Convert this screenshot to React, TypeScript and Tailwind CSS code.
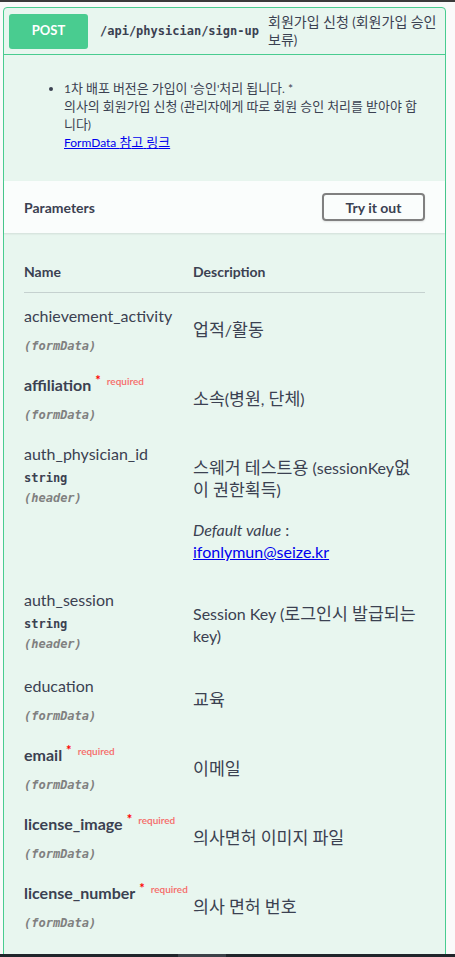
type Param = {
  name: string;
  required?: boolean;
  type?: string;
  in: string;
  desc: string;
  def?: string;
};

const params: Param[] = [
  { name: "achievement_activity", in: "formData", desc: "업적/활동" },
  { name: "affiliation", required: true, in: "formData", desc: "소속(병원, 단체)" },
  {
    name: "auth_physician_id",
    type: "string",
    in: "header",
    desc: "스웨거 테스트용 (sessionKey없이 권한획득)",
    def: "ifonlymun@seize.kr",
  },
  { name: "auth_session", type: "string", in: "header", desc: "Session Key (로그인시 발급되는 key)" },
  { name: "education", in: "formData", desc: "교육" },
  { name: "email", required: true, in: "formData", desc: "이메일" },
  { name: "license_image", required: true, in: "formData", desc: "의사면허 이미지 파일" },
  { name: "license_number", required: true, in: "formData", desc: "의사 면허 번호" },
];

// hangul syllables get a slightly larger size so widths match the original korean font
function K({ t }: { t: string }) {
  return (
    <>
      {t.split(/([\uAC00-\uD7A3])/).map((s, i) =>
        i % 2 ? (
          <span key={i} className="text-[1.08em] leading-none">
            {s}
          </span>
        ) : (
          s
        )
      )}
    </>
  );
}

function ParamRow({ p }: { p: Param }) {
  return (
    <div className="flex pt-[12px] pb-[8px]">
      {/* name column */}
      <div className="w-[169px] shrink-0">
        <div className={`text-[16px] leading-[22px] ${p.required ? "font-bold" : ""}`}>
          {p.name}
          {p.required && (
            <>
              <span className="relative -top-[6px] ml-[4px] text-[13px] leading-none font-bold text-[#ff0000]">*</span>
              <span className="relative -top-[6px] ml-[6px] text-[10px] leading-none font-semibold text-[#ff0000]/60">
                required
              </span>
            </>
          )}
        </div>
        {p.type ? (
          <div className="mt-[6px] text-[12px] leading-[14px] font-bold [font-family:'DejaVu_Sans_Mono',monospace]">
            {p.type}
          </div>
        ) : (
          <div className="h-[6px]" />
        )}
        <div className="mt-[5px] text-[12px] leading-[16px] italic font-bold text-[#808080] [font-family:'DejaVu_Sans_Mono',monospace]">
          ({p.in})
        </div>
      </div>

      {/* description column */}
      <div className="flex-1 mt-[14px] pb-[8px] pr-[4px] text-[16px] leading-[22px] flex flex-col gap-[16px]">
        <p>
          <K t={p.desc} />
        </p>
        {p.def && (
          <p className="-mb-[2px] mt-[2px]">
            <i>Default value</i> :{" "}
            <a className="text-[#0000ee] underline">{p.def}</a>
          </p>
        )}
      </div>
    </div>
  );
}

export default function App() {
  return (
    <div className="h-[957px] flex flex-col overflow-hidden bg-[#fafafa] text-[#3b4151] [font-family:Lato,'Noto_Sans_CJK_KR',sans-serif]">
      <div className="h-[2px] bg-[#3a3a3a] shrink-0" />

      <div className="flex-1 overflow-hidden pt-[5px]">
        <div className="ml-[3px] w-[443px] rounded-[4px] border border-[#49cc90] bg-[#e8f6ef] pb-[60px]">
          {/* summary */}
          <div className="flex items-center p-[5px] border-b border-[#49cc90]">
            <div className="w-[79px] h-[35px] shrink-0 rounded-[3px] bg-[#49cc90] text-white text-[13px] font-bold flex items-center justify-center">
              POST
            </div>
            <div className="pl-[12px] pr-[9px] shrink-0 text-[12px] font-semibold [font-family:'DejaVu_Sans_Mono',monospace]">
              /api/physician/sign-up
            </div>
            <div className="flex-1 text-[13px] leading-[18px]">
              <K t="회원가입 신청 (회원가입 승인 보류)" />
            </div>
          </div>

          {/* description */}
          <div className="px-[20px] pt-[25px] pb-[29px]">
            <ul className="list-disc pl-[40px] pr-[2px] text-[12px] leading-[18px]">
              <li>
                <K t="1차 배포 버전은 가입이 '승인'처리 됩니다. *" />
                <br />
                <K t="의사의 회원가입 신청 (관리자에게 따로 회원 승인 처리를 받아야 합니다)" />
                <br />
                <a className="text-[#0000ee] underline">
                  <K t="FormData 참고 링크" />
                </a>
              </li>
            </ul>
          </div>

          {/* parameters header */}
          <div className="h-[52px] flex items-center justify-between px-[20px] bg-white/80 shadow-[0_1px_2px_rgba(0,0,0,0.1)]">
            <h4 className="text-[14px] font-bold">Parameters</h4>
            <button className="w-[103px] h-[28px] rounded-[4px] border-2 border-[#808080] text-[14px] font-bold shadow-[0_1px_2px_rgba(0,0,0,0.1)]">
              Try it out
            </button>
          </div>

          {/* parameters table */}
          <div className="px-[20px]">
            <div className="flex pt-[30px] pb-[11px] border-b border-[#3b4151]/20 text-[14px] leading-[18px] font-bold">
              <div className="w-[169px]">Name</div>
              <div>Description</div>
            </div>
            {params.map((p) => (
              <ParamRow key={p.name} p={p} />
            ))}
          </div>
        </div>
      </div>

      <div className="h-[3px] shrink-0 bg-[#20252b] flex">
        <div className="ml-[178px] w-[48px] bg-[#3b4148]" />
      </div>
    </div>
  );
}
